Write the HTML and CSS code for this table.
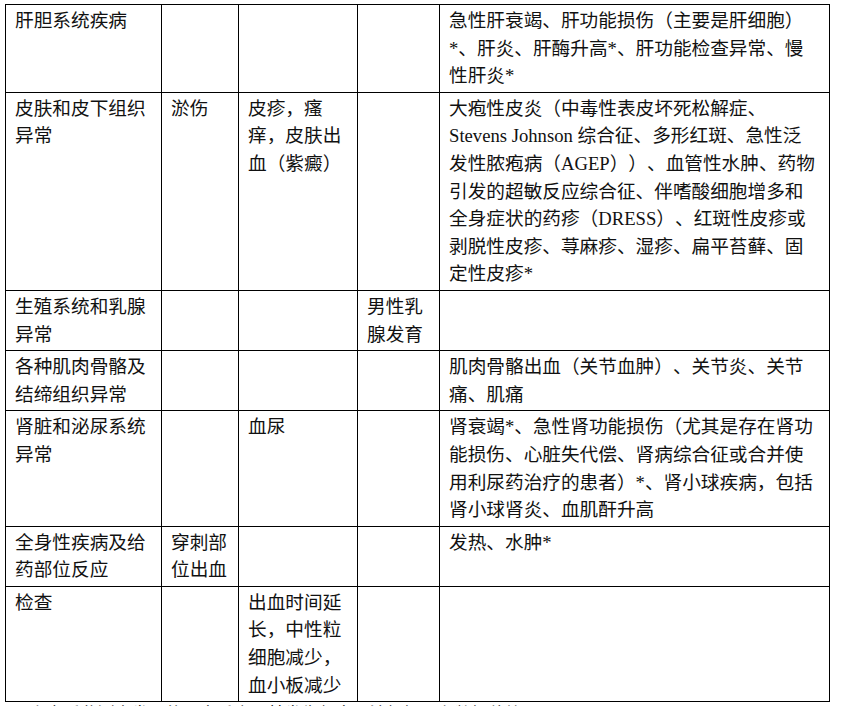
FILE: index.html
```html
<!DOCTYPE html>
<html lang="zh-CN">
<head>
<meta charset="utf-8">
<title>不良反应表</title>
<link rel="stylesheet" href="styles.css">
</head>
<body>
<div class="page">
<table class="adr">
  <colgroup>
    <col class="c1"><col class="c2"><col class="c3"><col class="c4"><col class="c5">
  </colgroup>
  <tbody>
    <tr class="r3">
      <td>肝胆系统疾病</td><td></td><td></td><td></td>
      <td>急性肝衰竭、肝功能损伤（主要是肝细胞）<br>*、肝炎、肝酶升高*、肝功能检查异常、慢<br>性肝炎*</td>
    </tr>
    <tr class="r7">
      <td>皮肤和皮下组织<br>异常</td><td>淤伤</td><td>皮疹，瘙<br>痒，皮肤出<br>血（紫癜）</td><td></td>
      <td>大疱性皮炎（中毒性表皮坏死松解症、<br><span class="lat">Stevens Johnson</span> 综合征、多形红斑、急性泛<br>发性脓疱病（<span class="lat">AGEP</span>））、血管性水肿、药物<br>引发的超敏反应综合征、伴嗜酸细胞增多和<br>全身症状的药疹（<span class="lat">DRESS</span>）、红斑性皮疹或<br>剥脱性皮疹、荨麻疹、湿疹、扁平苔藓、固<br>定性皮疹*</td>
    </tr>
    <tr class="r2">
      <td>生殖系统和乳腺<br>异常</td><td></td><td></td><td>男性乳<br>腺发育</td><td></td>
    </tr>
    <tr class="r2">
      <td>各种肌肉骨骼及<br>结缔组织异常</td><td></td><td></td><td></td>
      <td>肌肉骨骼出血（关节血肿）、关节炎、关节<br>痛、肌痛</td>
    </tr>
    <tr class="r4">
      <td>肾脏和泌尿系统<br>异常</td><td></td><td>血尿</td><td></td>
      <td>肾衰竭*、急性肾功能损伤（尤其是存在肾功<br>能损伤、心脏失代偿、肾病综合征或合并使<br>用利尿药治疗的患者）*、肾小球疾病，包括<br>肾小球肾炎、血肌酐升高</td>
    </tr>
    <tr class="r2">
      <td>全身性疾病及给<br>药部位反应</td><td>穿刺部<br>位出血</td><td></td><td></td>
      <td>发热、水肿*</td>
    </tr>
    <tr class="r4">
      <td>检查</td><td></td><td>出血时间延<br>长，中性粒<br>细胞减少，<br>血小板减少</td><td></td><td></td>
    </tr>
  </tbody>
</table>
<p class="note">*上市后监测中发现的不良反应，其发生频率无法根据现有数据估算。</p>
</div>
</body>
</html>
```
FILE: styles.css
```css
html, body {
  margin: 0;
  padding: 0;
  background: #ffffff;
}
.page {
  padding: 4px 0 0 5px;
  font-family: "Liberation Serif", "Noto Sans CJK SC", serif;
  font-size: 18.67px;
  line-height: 27.6px;
  color: #111111;
  text-spacing-trim: space-all;
}
.adr {
  border-collapse: collapse;
  table-layout: fixed;
  width: 824px;
}
.c1 { width: 156px; }
.c2 { width: 77px; }
.c3 { width: 119px; }
.c4 { width: 82px; }
.c5 { width: 390px; }
.adr td {
  border: 1px solid #000000;
  vertical-align: top;
  padding: 2px 4px 2px 9px;
  white-space: nowrap;
  overflow: hidden;
}
.lat {
  font-family: "Liberation Serif", serif;
}
.note {
  margin: 0;
  padding: 1px 0 0 16px;
  font-size: 17px;
  line-height: 24px;
}
```
